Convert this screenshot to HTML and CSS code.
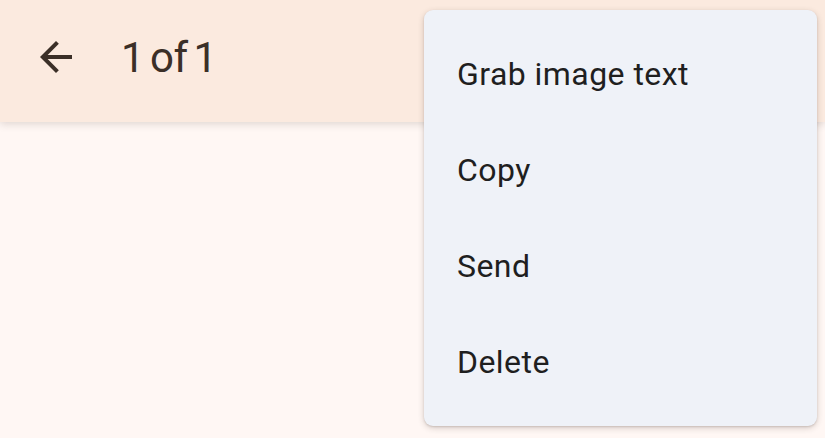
FILE: index.html
```html
<!DOCTYPE html>
<html>
<head>
<meta charset="utf-8">
<link rel="stylesheet" href="styles.css">
</head>
<body>
<div class="app">
  <header class="topbar">
    <button class="back" aria-label="Back">
      <svg viewBox="0 0 24 24" width="48" height="48"><path d="M20 11H7.83l5.59-5.59L12 4l-8 8 8 8 1.41-1.41L7.83 13H20v-2z" fill="currentColor"/></svg>
    </button>
    <div class="title">1 of 1</div>
  </header>
  <main class="content"></main>
  <ul class="menu">
    <li class="item">Grab image text</li>
    <li class="item">Copy</li>
    <li class="item">Send</li>
    <li class="item">Delete</li>
  </ul>
</div>
</body>
</html>
```
FILE: styles.css
```css
html, body {
  margin: 0;
  padding: 0;
  width: 825px;
  height: 438px;
  overflow: hidden;
  font-family: Roboto, "Noto Sans", sans-serif;
}
.app {
  position: relative;
  width: 825px;
  height: 438px;
  background: #fff7f4;
  display: flex;
  flex-direction: column;
}
.topbar {
  height: 122px;
  background: #fbeadf;
  display: flex;
  align-items: center;
  padding-left: 32px;
  box-shadow: 0 2px 8px rgba(80, 60, 50, 0.18);
  position: relative;
  z-index: 1;
  box-sizing: border-box;
  padding-bottom: 8px;
}
.back {
  border: 0;
  background: none;
  padding: 0;
  width: 48px;
  height: 48px;
  color: #3b2f27;
  display: flex;
}
.title {
  margin-left: 41px;
  font-size: 42px;
  color: #3b2f27;
  letter-spacing: -0.5px;
  word-spacing: -4px;
}
.content {
  flex: 1;
}
.menu {
  position: absolute;
  left: 424px;
  top: 10px;
  width: 393px;
  margin: 0;
  padding: 16px 0;
  list-style: none;
  background: #eff2f8;
  border-radius: 9px;
  box-shadow: 0 2px 6px rgba(60, 40, 30, 0.2), 0 1px 2px rgba(60, 40, 30, 0.15);
  z-index: 2;
}
.item {
  height: 96px;
  display: flex;
  align-items: center;
  padding-left: 33px;
  font-size: 32px;
  letter-spacing: 0.45px;
  color: #1f1f1f;
}
```
